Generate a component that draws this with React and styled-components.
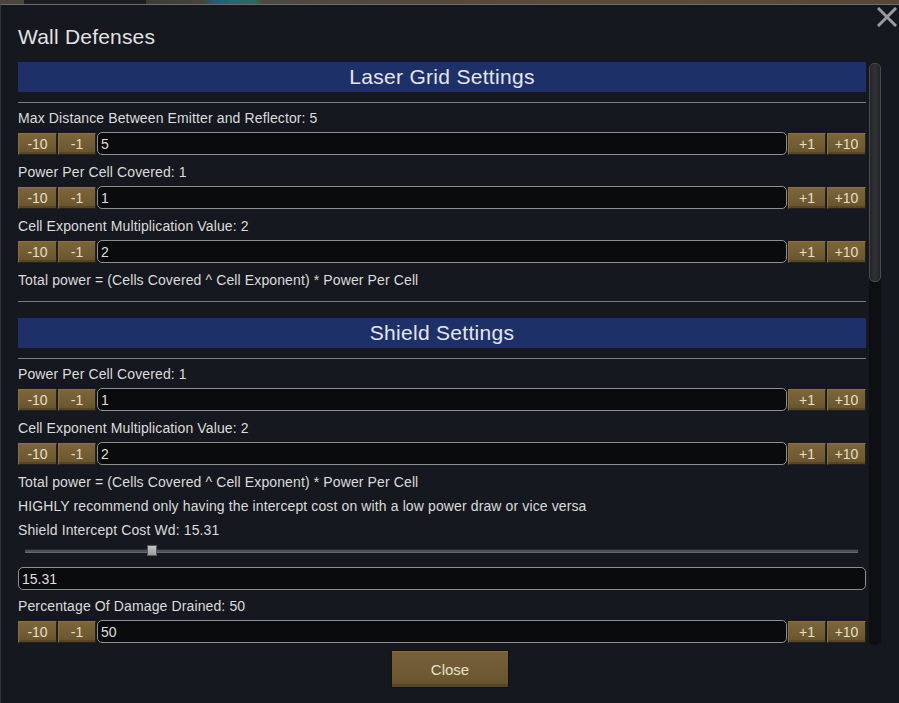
import React from 'react'
import styled, { createGlobalStyle } from 'styled-components'

const GlobalStyle = createGlobalStyle`
  html, body {
    margin: 0;
    padding: 0;
    background: #15181e;
    overflow: hidden;
  }
  * { box-sizing: border-box; }
`

const MapStrip = styled.div`
  height: 4px;
  background: linear-gradient(90deg,
    #4a463f 0px, #4a463f 24px,
    #1b1d20 24px, #1b1d20 146px,
    #3d3b36 146px, #48443b 205px,
    #3a4a44 205px, #2a5a78 215px, #1e6a72 230px, #2d6a60 256px,
    #4c4a40 262px, #55483a 420px, #5e4a38 600px, #5a4636 899px);
`

const Window = styled.div`
  height: 699px;
  background: #15181e;
  border-top: 1px solid #6a6d70;
  border-left: 1px solid #33363b;
  display: flex;
  flex-direction: column;
  font-family: 'Liberation Sans', Arial, sans-serif;
  color: #dcdcdc;
`

const TitleBar = styled.div`
  display: flex;
  justify-content: space-between;
  align-items: flex-start;
  padding: 0 2px 0 17px;
  height: 57px;
`

const Title = styled.h1`
  margin: 20px 0 0;
  font-size: 21px;
  line-height: 24px;
  font-weight: normal;
  letter-spacing: 0.2px;
  color: #e2e2e2;
`

const CloseX = styled.button`
  margin-top: 2px;
  width: 20px;
  height: 20px;
  padding: 0;
  border: none;
  background: transparent;
  display: flex;
`

const Body = styled.div`
  display: flex;
  gap: 3px;
  padding: 0 18px 0 17px;
  height: 583px;
`

const Scroll = styled.div`
  flex: 1;
  overflow: hidden;
  display: flex;
  flex-direction: column;
`

const ScrollTrack = styled.div`
  width: 12px;
  margin-top: 1px;
  background: #0d0f12;
  border-radius: 5px;
  display: flex;
  flex-direction: column;
`

const ScrollThumb = styled.div`
  height: 219px;
  background: linear-gradient(90deg, #222428, #303236 50%, #222428);
  border: 1px solid #4a4c50;
  border-radius: 5px;
`

const SectionHeader = styled.div`
  height: 30px;
  flex-shrink: 0;
  margin-top: ${p => p.$first ? '0' : '16px'};
  background: #1d3168;
  color: #e4e6ee;
  font-size: 21px;
  line-height: 30px;
  text-align: center;
  letter-spacing: 0.3px;
`

const Divider = styled.div`
  height: 1px;
  flex-shrink: 0;
  background: #7a7c80;
  margin: ${p => p.$after ? '8px 0 0' : '10px 0 4px'};
`

const Label = styled.div`
  font-size: 14px;
  letter-spacing: 0.12px;
  line-height: 22px;
  height: 22px;
  flex-shrink: 0;
  margin-top: ${p => p.$gap || 0}px;
  white-space: nowrap;
`

const Row = styled.div`
  display: flex;
  align-items: stretch;
  height: 22px;
  flex-shrink: 0;
  margin: 4px 0 6px;
`

const StepButton = styled.button`
  width: ${p => p.$w}px;
  margin-left: ${p => p.$ml || 0}px;
  margin-right: ${p => p.$mr || 0}px;
  padding: 0;
  background: linear-gradient(180deg, #7b653a 0%, #715c33 60%, #66532d 100%);
  border: 1px solid #2a2112;
  border-top-color: #8b7443;
  border-left-color: #85703f;
  box-shadow: inset 0 -2px 0 #574625;
  color: #e9dfc6;
  font-family: 'Liberation Sans', Arial, sans-serif;
  font-size: 14px;
  line-height: 18px;
  text-align: center;
`

const NumberInput = styled.input`
  flex: 1;
  min-width: 0;
  height: 23px;
  margin-top: -1px;
  padding: 0 3px;
  background: #0a0b0d;
  border: 1px solid #8e8e8e;
  border-radius: 5px;
  color: #dedede;
  font-family: 'Liberation Sans', Arial, sans-serif;
  font-size: 14px;
  outline: none;
`

const WideInput = styled(NumberInput)`
  flex: none;
  width: 100%;
  margin-top: 6px;
  flex-shrink: 0;
`

const Note = styled.div`
  font-size: 14px;
  letter-spacing: 0.12px;
  line-height: 22px;
  flex-shrink: 0;
  margin-bottom: 2px;
  white-space: nowrap;
`

const SliderWrap = styled.div`
  position: relative;
  height: 20px;
  flex-shrink: 0;
  margin: 0 8px 0 7px;
  display: flex;
  align-items: center;
`

const SliderTrack = styled.div`
  width: 100%;
  height: 4px;
  background: #4e5053;
  border-top: 1px solid #2a2b2e;
  border-bottom: 1px solid #66686b;
`

const SliderThumb = styled.div`
  position: absolute;
  left: ${p => p.$pos}px;
  top: 4px;
  width: 10px;
  height: 11px;
  background: linear-gradient(180deg, #c4c4c4, #9a9a9a);
  border: 1px solid #5a5a5a;
`

const Footer = styled.div`
  flex: 1;
  display: flex;
  justify-content: center;
  padding-top: 5px;
`

const CloseButton = styled.button`
  width: 118px;
  height: 38px;
  background: linear-gradient(180deg, #76613a 0%, #6d5931 70%, #64522d 100%);
  border: 1px solid #16120a;
  box-shadow: inset 0 -3px 0 #574626, inset 0 1px 0 #847048;
  color: #ebe0c6;
  font-family: 'Liberation Sans', Arial, sans-serif;
  font-size: 15px;
`

const StepperRow = ({ value }) => (
  <Row>
    <StepButton $w={39}>-10</StepButton>
    <StepButton $w={38} $ml={1} $mr={1}>-1</StepButton>
    <NumberInput defaultValue={value} />
    <StepButton $w={38} $ml={1}>+1</StepButton>
    <StepButton $w={39} $ml={1}>+10</StepButton>
  </Row>
)

const Field = ({ label, value, gap }) => (
  <>
    <Label $gap={gap}>{label}</Label>
    <StepperRow value={value} />
  </>
)

export default function App() {
  return (
    <>
      <GlobalStyle />
      <MapStrip />
      <Window>
        <TitleBar>
          <Title>Wall Defenses</Title>
          <CloseX aria-label="Close">
            <svg width="20" height="20" viewBox="0 0 20 20">
              <path d="M2 2 L18 18 M18 2 L2 18" stroke="#9a9b9d" strokeWidth="3" strokeLinecap="square" />
            </svg>
          </CloseX>
        </TitleBar>
        <Body>
          <Scroll>
            <SectionHeader $first>Laser Grid Settings</SectionHeader>
            <Divider />
            <Field label="Max Distance Between Emitter and Reflector: 5" value="5" />
            <Field label="Power Per Cell Covered: 1" value="1" />
            <Field label="Cell Exponent Multiplication Value: 2" value="2" />
            <Note>Total power = (Cells Covered ^ Cell Exponent) * Power Per Cell</Note>
            <Divider $after />

            <SectionHeader>Shield Settings</SectionHeader>
            <Divider />
            <Field label="Power Per Cell Covered: 1" value="1" />
            <Field label="Cell Exponent Multiplication Value: 2" value="2" />
            <Note>Total power = (Cells Covered ^ Cell Exponent) * Power Per Cell</Note>
            <Note>HIGHLY recommend only having the intercept cost on with a low power draw or vice versa</Note>
            <Label>Shield Intercept Cost Wd: 15.31</Label>
            <SliderWrap>
              <SliderTrack />
              <SliderThumb $pos={122} />
            </SliderWrap>
            <WideInput defaultValue="15.31" />
            <Field label="Percentage Of Damage Drained: 50" value="50" gap={5} />
          </Scroll>
          <ScrollTrack>
            <ScrollThumb />
          </ScrollTrack>
        </Body>
        <Footer>
          <CloseButton>Close</CloseButton>
        </Footer>
      </Window>
    </>
  )
}
